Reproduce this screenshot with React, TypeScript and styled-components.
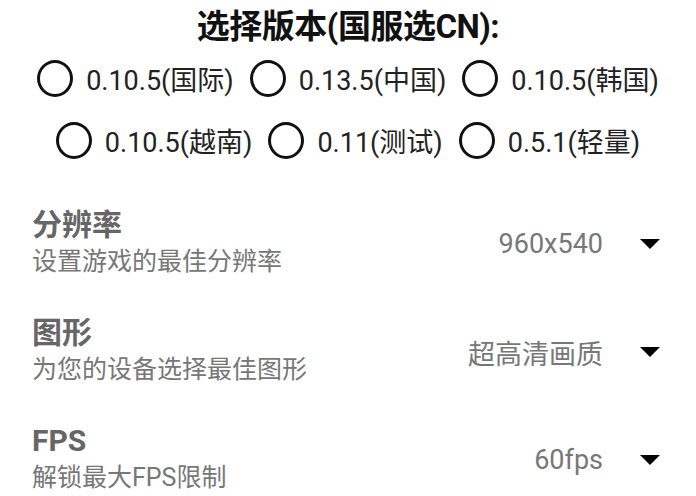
import React from "react";
import styled, { createGlobalStyle } from "styled-components";

const versions = [
  ["0.10.5(国际)", "0.13.5(中国)", "0.10.5(韩国)"],
  ["0.10.5(越南)", "0.11(测试)", "0.5.1(轻量)"],
];

const settings = [
  { title: "分辨率", desc: "设置游戏的最佳分辨率", value: "960x540" },
  { title: "图形", desc: "为您的设备选择最佳图形", value: "超高清画质" },
  { title: "FPS", desc: "解锁最大FPS限制", value: "60fps" },
];

const App: React.FC = () => {
  return (
    <>
      <GlobalStyle />
      <Page>
        <Title>选择版本(国服选CN):</Title>
        {versions.map((row, idx) => (
          <RadioRow key={idx}>
            {row.map((label) => (
              <RadioItem key={label}>
                <Circle />
                <RadioLabel>{label}</RadioLabel>
              </RadioItem>
            ))}
          </RadioRow>
        ))}
        <SettingList>
          {settings.map((s) => (
            <SettingRow key={s.title}>
              <SettingText>
                <SettingTitle>{s.title}</SettingTitle>
                <SettingDesc>{s.desc}</SettingDesc>
              </SettingText>
              <SettingValue>
                <span>{s.value}</span>
                <Arrow viewBox="0 0 20 10">
                  <path d="M0 0 L20 0 L10 10 Z" fill="#000" />
                </Arrow>
              </SettingValue>
            </SettingRow>
          ))}
        </SettingList>
      </Page>
    </>
  );
};

export default App;

const GlobalStyle = createGlobalStyle`
  body {
    margin: 0;
    background: #fff;
    font-family: Roboto, "Noto Sans CJK SC", sans-serif;
  }
`;

const Page = styled.div`
  width: 696px;
  height: 496px;
  overflow: hidden;
  padding-top: 8px;
  box-sizing: border-box;
`;

const Title = styled.div`
  text-align: center;
  font-size: 33px;
  font-weight: 700;
  color: #111;
  line-height: 38px;
  letter-spacing: -0.5px;
  margin-bottom: 14px;
`;

const RadioRow = styled.div`
  display: flex;
  justify-content: center;
  gap: 16px;
  height: 36px;
  margin-bottom: 26px;
`;

const RadioItem = styled.div`
  display: flex;
  align-items: center;
  gap: 13px;
`;

const Circle = styled.div`
  width: 30px;
  height: 31px;
  border: 3.5px solid #111;
  border-radius: 50%;
`;

const RadioLabel = styled.span`
  font-size: 27px;
  color: #222;
`;

const SettingList = styled.div`
  display: flex;
  flex-direction: column;
  gap: 34px;
  padding-top: 23px;
`;

const SettingRow = styled.div`
  display: flex;
  justify-content: space-between;
  align-items: center;
  padding: 0 36px 0 32px;
  height: 74px;
`;

const SettingText = styled.div`
  display: flex;
  flex-direction: column;
`;

const SettingTitle = styled.div`
  font-size: 30px;
  font-weight: 700;
  color: #666;
  line-height: 36px;
`;

const SettingDesc = styled.div`
  font-size: 25px;
  color: #777;
  line-height: 38px;
`;

const SettingValue = styled.div`
  display: flex;
  align-items: center;
  gap: 37px;
  font-size: 27px;
  color: #777;
`;

const Arrow = styled.svg`
  width: 20px;
  height: 10px;
`;
